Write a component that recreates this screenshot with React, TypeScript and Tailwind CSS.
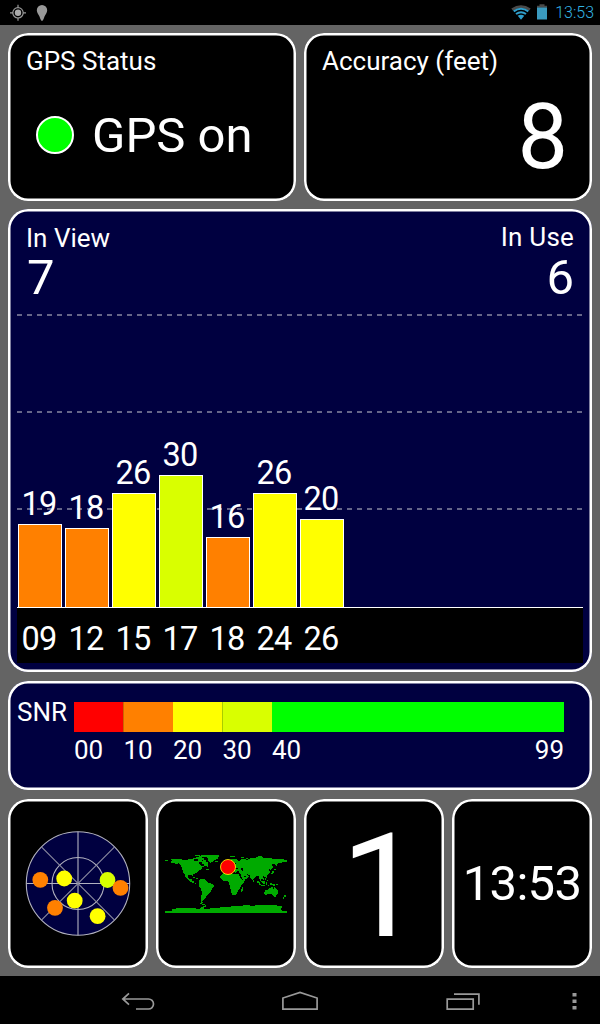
import React from "react";

type Satellite = {
  id: string;
  snr: number;
  color: string;
};

const satellites: Satellite[] = [
  { id: "09", snr: 19, color: "bg-[#ff8000]" },
  { id: "12", snr: 18, color: "bg-[#ff8000]" },
  { id: "15", snr: 26, color: "bg-[#ffff00]" },
  { id: "17", snr: 30, color: "bg-[#d9ff00]" },
  { id: "18", snr: 16, color: "bg-[#ff8000]" },
  { id: "24", snr: 26, color: "bg-[#ffff00]" },
  { id: "26", snr: 20, color: "bg-[#ffff00]" },
];

const dots = [
  { x: 40.3, y: 879.8, fill: "#ff8000" },
  { x: 64.2, y: 878.5, fill: "#ffff00" },
  { x: 107.5, y: 880, fill: "#d9ff00" },
  { x: 120.5, y: 887.8, fill: "#ff8000" },
  { x: 74.7, y: 900.7, fill: "#ffff00" },
  { x: 55, y: 907.8, fill: "#ff8000" },
  { x: 97.6, y: 916.2, fill: "#ffff00" },
];

function Card({
  className,
  children,
}: {
  className: string;
  children: React.ReactNode;
}) {
  return (
    <div
      className={
        "rounded-[20px] shadow-[inset_0_0_0_2.5px_#ffffff] " + className
      }
    >
      {children}
    </div>
  );
}

function StatusBar() {
  return (
    <div className="flex h-[25px] items-center justify-between bg-black">
      <svg width="60" height="25" viewBox="0 0 60 25">
        <g stroke="#999999" strokeWidth="1.2" fill="none">
          <circle cx="18" cy="12.8" r="5.2" />
          <path d="M18 4.8v3M18 17.8v3M10 12.8h3M23 12.8h3" />
        </g>
        <circle cx="18" cy="12.8" r="3.2" fill="#aaaaaa" />
        <path
          d="M42 5a5.2 5.2 0 0 1 5.2 5.2c0 2.6-2 4.3-2.8 6.6-.6 1.8-1.4 4.2-2.4 4.2s-1.8-2.4-2.4-4.2c-.8-2.3-2.8-4-2.8-6.6A5.2 5.2 0 0 1 42 5z"
          fill="#999999"
        />
      </svg>
      <div className="flex items-center pr-[6px]">
        <svg width="44" height="25" viewBox="508 0 44 25">
          <path d="M511.3 8.6Q521 1.8 530.7 8.6L529 10.7Q521 5.1 513 10.7Z" fill="#4a4a4a" />
          <g fill="none" stroke="#2f9fcc" strokeWidth="2.1">
            <path d="M513.7 11.3Q521 6.3 528.3 11.3" />
            <path d="M516 14Q521 10.6 526 14" />
          </g>
          <path d="M517.7 15.8Q521 13.6 524.3 15.8L521 19.7Z" fill="#2f9fcc" />
          <path d="M539.500 4.300h5v1.400h2.500v2h-10v-2h2.500z" fill="#4a4a4a" />
          <rect x="537" y="7.5" width="10" height="12" fill="#3a9abf" />
        </svg>
        <span className="w-[42px] text-right text-[16px] leading-[25px] font-light text-[#33b5e5]">
          13:53
        </span>
      </div>
    </div>
  );
}

function SatelliteChart() {
  return (
    <div className="relative mx-[9px] mt-[10px] flex h-[349px] flex-col">
      {/* grid lines at every 22 dB */}
      <div className="absolute inset-x-0 top-0 flex flex-col gap-[95px]">
        {[66, 44, 22].map((level) => (
          <div
            key={level}
            className="h-[2px] bg-[repeating-linear-gradient(90deg,#666689_0_5px,transparent_5px_10px)]"
          />
        ))}
      </div>
      <div className="relative flex h-[293px] items-end gap-[3px] pl-px">
        {satellites.map((sat) => (
          <div key={sat.id} className="flex w-[44px] flex-col items-center">
            <span className="pr-[2px] text-[32.5px] leading-[40px] tracking-[-0.8px]">
              {sat.snr}
            </span>
            <div
              className={"w-full border border-b-0 border-white " + sat.color}
              style={{ height: Math.floor(sat.snr * 4.4) }}
            />
          </div>
        ))}
      </div>
      <div className="relative flex h-[56px] gap-[3px] border-t border-white bg-black pl-px">
        {satellites.map((sat) => (
          <span
            key={sat.id}
            className="w-[44px] pr-[2px] text-center text-[32.5px] leading-[62px] tracking-[-0.8px]"
          >
            {sat.id}
          </span>
        ))}
      </div>
    </div>
  );
}

function SnrScale() {
  return (
    <div className="flex pt-[21px] pr-[28px] pl-[9px] text-[26px]">
      <span className="w-[57px] leading-[21px]">SNR</span>
      <div className="flex-1">
        <div className="flex h-[30px]">
          <div className="w-[49px] bg-[#ff0000]" />
          <div className="w-[50px] border-l border-[#cc6600] bg-[#ff8000]" />
          <div className="w-[49px] bg-[#ffff00]" />
          <div className="w-[50px] border-l border-[#aacc00] bg-[#d9ff00]" />
          <div className="flex-1 bg-[#00ff00]" />
        </div>
        <div className="flex pt-[2px] leading-[32px]">
          <span className="w-[49.5px]">00</span>
          <span className="w-[49.5px]">10</span>
          <span className="w-[49.5px]">20</span>
          <span className="w-[49.5px]">30</span>
          <span>40</span>
          <span className="ml-auto">99</span>
        </div>
      </div>
    </div>
  );
}

function SkyView() {
  return (
    <svg width="140" height="169" viewBox="8 799 140 169">
      <circle cx="78" cy="883.5" r="51.7" fill="#000040" />
      <g fill="none" stroke="#b2b2c0" strokeWidth="1.1">
        <circle cx="78" cy="883.5" r="51.7" />
        <circle cx="78" cy="883.5" r="26" />
        <path d="M26.3 883.5h103.4M78 831.8v103.4" />
        <path d="M41.4 846.9l73.2 73.2M114.6 846.9l-73.2 73.2" stroke="#8c8ca0" />
      </g>
      {dots.map((dot) => (
        <circle key={dot.x} cx={dot.x} cy={dot.y} r="7.9" fill={dot.fill} />
      ))}
    </svg>
  );
}

function WorldMap() {
  return (
    <svg width="126" height="66" viewBox="0 0 378 198">
      <g fill="#00aa00" shapeRendering="crispEdges">
        {/* north america */}
        <path d="M18 27H54V30H72V27H90V33H102V27H114V33H126V39L132 45V51L123 48L114 51V57L105 60L96 69L87 72V81L84 75H72V84L78 87H84V93H90V99H96V102L87 99L75 93L66 84L63 75L57 66L54 54L51 45L42 39H21L18 36L24 33Z" />
        <path d="M87 24H96V21H105V18H114V24H120V30H108V27H87ZM93 15H108V18H93ZM117 30H126V36H132V42H123V36H117ZM126 57H135V60H126ZM3 29H12V33H3ZM33 39H42V42H33Z" />
        {/* greenland and iceland */}
        <path d="M111 15H165V21H162V27L150 30L144 36L138 39L132 33V24L123 21H111ZM153 33H162V37H153Z" />
        {/* caribbean */}
        <path d="M87 81H93V84H87ZM96 84H102V87H96Z" />
        {/* south america */}
        <path d="M108 87H120L129 93L132 99L147 102L150 108L144 117L141 126L132 132L126 141L120 147L114 153V156H117V159H111V153L112 138L114 126L111 117L105 108L104 99Z" />
        {/* europe and asia */}
        <path d="M177 63V57L186 54V48L198 42L192 36L201 27L216 27L222 33L231 30V27H246V30L258 27V24H273L282 19H294L300 24H315L333 27H351L369 30V36H357L351 39H342L336 48L333 42L324 42L327 51L321 60L315 57L318 66L309 75L303 81L297 78L300 90L294 87L290 84L294 96L288 93L285 78L279 78L270 84L267 92L261 87L257 75L246 72L255 78L246 87L237 90L231 78L228 69L219 66L213 69L207 60L198 63L189 57L186 66Z" />
        <path d="M180 42H187V51H180ZM198 18H213V21H198ZM231 21H240V24H231ZM246 24H252V27H246ZM330 57H336V60H330ZM324 63H330V69H324ZM321 69H327V72H321ZM306 79H309V84H306ZM267 90H270V95H267ZM336 42H339V49H336Z" />
        {/* africa */}
        <path d="M174 72L183 66H198V69H204V72H225L228 81L234 90H243L240 96L231 105L229 114L222 123L219 132L210 135H204L201 123L198 111L195 96L189 93H177L171 87L168 81Z" />
        <path d="M234 111H237V120L234 126H231V117H234Z" />
        {/* south east asia */}
        <path d="M279 93H285V97H288V102H291V106H285V99H279ZM294 93H303V103H297V99H294ZM291 106H302V108H291ZM306 97H310V105H306ZM303 84H306V90H303ZM309 90H312V93H309ZM318 99H324V102H333V108H327V105H318ZM312 105H315V108H312ZM336 102H342V105H336Z" />
        {/* australia and new zealand */}
        <path d="M303 120H309L312 117L318 114L321 111H327V117H330V111H333L336 117L342 123V129L336 138H327L321 132H312L303 135L301 129ZM330 139H335V142H330ZM360 135H366V139L363 141H360ZM357 141H361V147H357Z" />
        {/* antarctica */}
        <path d="M3 183H24V177H36V174H84L105 177L111 171L120 168L126 165V171H120V177H138V174H159L174 171H192L210 168H228L246 165H258V168H273V165H333L342 168H354V174H351V180H354V183H369V189H3ZM108 159H114V162H108ZM114 163H123V166H114Z" />
      </g>
      {/* inland water */}
      <g fill="#000000" shapeRendering="crispEdges">
        <path d="M105 36H114V42H120V48H111L105 42ZM96 30H102V33H96ZM213 54H222V57H213ZM231 54H237V63H234V60H231ZM219 63H225V66H219ZM228 72H231V78H228ZM240 78H246V81H240ZM210 39H216V42H210Z" />
      </g>
      <circle cx="192" cy="51" r="22.5" fill="#ff0000" stroke="#ffff00" strokeWidth="2.5" />
    </svg>
  );
}

function NavBar() {
  return (
    <div className="flex h-12 items-center bg-black">
      <svg width="600" height="48" viewBox="0 976 600 48">
        <g fill="none" stroke="#999999" strokeWidth="1.7">
          <path d="M129 993.3l-6.2 5.7 6.2 5.7M123 999h25.500a5 5 0 0 1 0 10H136" />
          <path d="M282.9 1009.200V998L300 992.4l17.1 5.6v11.200z" />
          <path d="M447.2 999.2h26v10h-26zM454 994.2h24.9v10.6" />
        </g>
        <path
          d="M572.5 993h4v3.5h-4zM572.5 999.5h4v3.5h-4zM572.5 1006h4v3.5h-4z"
          fill="#999999"
        />
      </svg>
    </div>
  );
}

function App() {
  return (
    <div className="flex h-[1024px] w-[600px] flex-col overflow-hidden bg-[#646464] font-['Roboto',sans-serif] text-white">
      <StatusBar />

      <div className="flex flex-1 flex-col px-2 pt-2">
        <div className="flex gap-2">
          <Card className="h-[168px] w-[288px] bg-black pl-[18px]">
            <h2 className="pt-[12px] text-[26px] leading-[32px]">GPS Status</h2>
            <div className="flex items-center gap-[18px] pt-[26px] pl-[10px]">
              <div className="h-[38px] w-[38px] rounded-full border-2 border-white bg-[#00ff00]" />
              <span className="pt-[2px] text-[49px] leading-[62px]">GPS on</span>
            </div>
          </Card>
          <Card className="h-[168px] w-[288px] bg-black pr-[24px] pl-[18px]">
            <h2 className="pt-[12px] text-[26px] leading-[32px]">
              Accuracy (feet)
            </h2>
            <p className="pt-[13px] text-right text-[90px] leading-[96px]">8</p>
          </Card>
        </div>

        <Card className="mt-2 h-[463px] bg-[#000040]">
          <div className="flex h-[95px] justify-between px-[18px] pt-[13px]">
            <div>
              <h2 className="text-[26px] leading-[32px]">In View</h2>
              <p className="pl-px text-[49px] leading-[48px]">7</p>
            </div>
            <div className="text-right">
              <h2 className="text-[26px] leading-[31px] tracking-[0.2px]">
                In Use
              </h2>
              <p className="text-[49px] leading-[50px]">6</p>
            </div>
          </div>
          <SatelliteChart />
        </Card>

        <Card className="mt-[9px] h-[109px] bg-[#000040]">
          <SnrScale />
        </Card>

        <div className="mt-[9px] flex gap-2">
          <Card className="h-[169px] w-[140px] bg-black">
            <SkyView />
          </Card>
          <Card className="flex h-[169px] w-[140px] justify-center bg-black pt-[51px] pl-[2px]">
            <WorldMap />
          </Card>
          <Card className="flex h-[169px] w-[140px] items-center justify-center bg-black pt-[6px] pl-[15px] text-[145px] leading-[169px]">
            1
          </Card>
          <Card className="flex h-[169px] w-[140px] items-center justify-center bg-black text-[49px] tracking-[-0.7px]">
            13:53
          </Card>
        </div>
      </div>

      <NavBar />
    </div>
  );
}

export default App;
